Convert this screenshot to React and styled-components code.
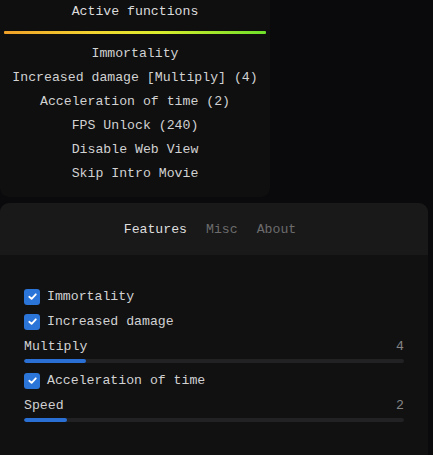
import React from "react";
import styled, { createGlobalStyle } from "styled-components";

const GlobalStyle = createGlobalStyle`
  html, body {
    margin: 0;
    padding: 0;
    background: #0a0a0c;
  }
  body {
    font-family: "Liberation Mono", "DejaVu Sans Mono", monospace;
    font-size: 13.2px;
    color: #d0d0d0;
  }
`;

const Page = styled.div`
  display: flex;
  flex-direction: column;
  align-items: flex-start;
  gap: 6px;
  height: 455px;
  overflow: hidden;
`;

const ActivePanel = styled.div`
  width: 270px;
  background: #0f0f10;
  border-radius: 0 0 9px 9px;
  padding-bottom: 11px;
  display: flex;
  flex-direction: column;
  align-items: center;
`;

const PanelTitle = styled.div`
  height: 23px;
  line-height: 23px;
  text-align: center;
  color: #dcdcdc;
`;

const GradientBar = styled.div`
  align-self: stretch;
  margin: 8px 4px 8px;
  height: 3px;
  border-radius: 1px;
  background: linear-gradient(90deg, #f0a028 0%, #f2d530 35%, #d8ec2c 60%, #6ee02a 100%);
`;

const ActiveItem = styled.div`
  line-height: 24px;
  text-align: center;
  color: #d2d2d2;
  white-space: nowrap;
`;

const MenuPanel = styled.div`
  width: 428px;
  flex: 1;
  border-radius: 9px 9px 0 0;
  overflow: hidden;
  background: #111112;
  display: flex;
  flex-direction: column;
`;

const Tabs = styled.div`
  height: 52px;
  background: #19191a;
  display: flex;
  align-items: center;
  justify-content: center;
  gap: 19px;
  padding-right: 8px;
`;

const Tab = styled.div`
  color: ${props => (props.active ? "#dedede" : "#6c6c6c")};
`;

const Content = styled.div`
  padding: 29px 24px 0;
  display: flex;
  flex-direction: column;
`;

const CheckRow = styled.div`
  height: 25px;
  display: flex;
  align-items: center;
  gap: 7px;
  color: #d2d2d2;
`;

const Box = styled.div`
  width: 16px;
  height: 16px;
  border-radius: 3px;
  background: #2b74d8;
  display: flex;
  align-items: center;
  justify-content: center;
`;

const SliderLabel = styled.div`
  height: 25px;
  display: flex;
  align-items: center;
  justify-content: space-between;
  color: #d2d2d2;
`;

const SliderValue = styled.span`
  color: #858585;
`;

const Track = styled.div`
  height: 4px;
  border-radius: 2px;
  background: #222224;
  margin-bottom: 5px;
  overflow: hidden;
`;

const Fill = styled.div`
  height: 100%;
  background: #2a6fd4;
  border-radius: 2px;
`;

const Checkbox = ({ label }) => (
  <CheckRow>
    <Box>
      <svg width="11" height="11" viewBox="0 0 12 12">
        <path d="M2.5 6.3 L5 8.6 L9.6 3.6" fill="none" stroke="#fff" strokeWidth="2" strokeLinecap="round" strokeLinejoin="round" />
      </svg>
    </Box>
    {label}
  </CheckRow>
);

const Slider = ({ label, value, fill }) => (
  <>
    <SliderLabel>
      {label}
      <SliderValue>{value}</SliderValue>
    </SliderLabel>
    <Track>
      <Fill style={{ width: fill }} />
    </Track>
  </>
);

const active = [
  "Immortality",
  "Increased damage [Multiply] (4)",
  "Acceleration of time (2)",
  "FPS Unlock (240)",
  "Disable Web View",
  "Skip Intro Movie",
];

const App = () => (
  <>
    <GlobalStyle />
    <Page>
      <ActivePanel>
        <PanelTitle>Active functions</PanelTitle>
        <GradientBar />
        {active.map((a, i) => (
          <ActiveItem key={i}>{a}</ActiveItem>
        ))}
      </ActivePanel>
      <MenuPanel>
        <Tabs>
          <Tab active>Features</Tab>
          <Tab>Misc</Tab>
          <Tab>About</Tab>
        </Tabs>
        <Content>
          <Checkbox label="Immortality" />
          <Checkbox label="Increased damage" />
          <Slider label="Multiply" value="4" fill="62px" />
          <Checkbox label="Acceleration of time" />
          <Slider label="Speed" value="2" fill="43px" />
        </Content>
      </MenuPanel>
    </Page>
  </>
);

export default App;
